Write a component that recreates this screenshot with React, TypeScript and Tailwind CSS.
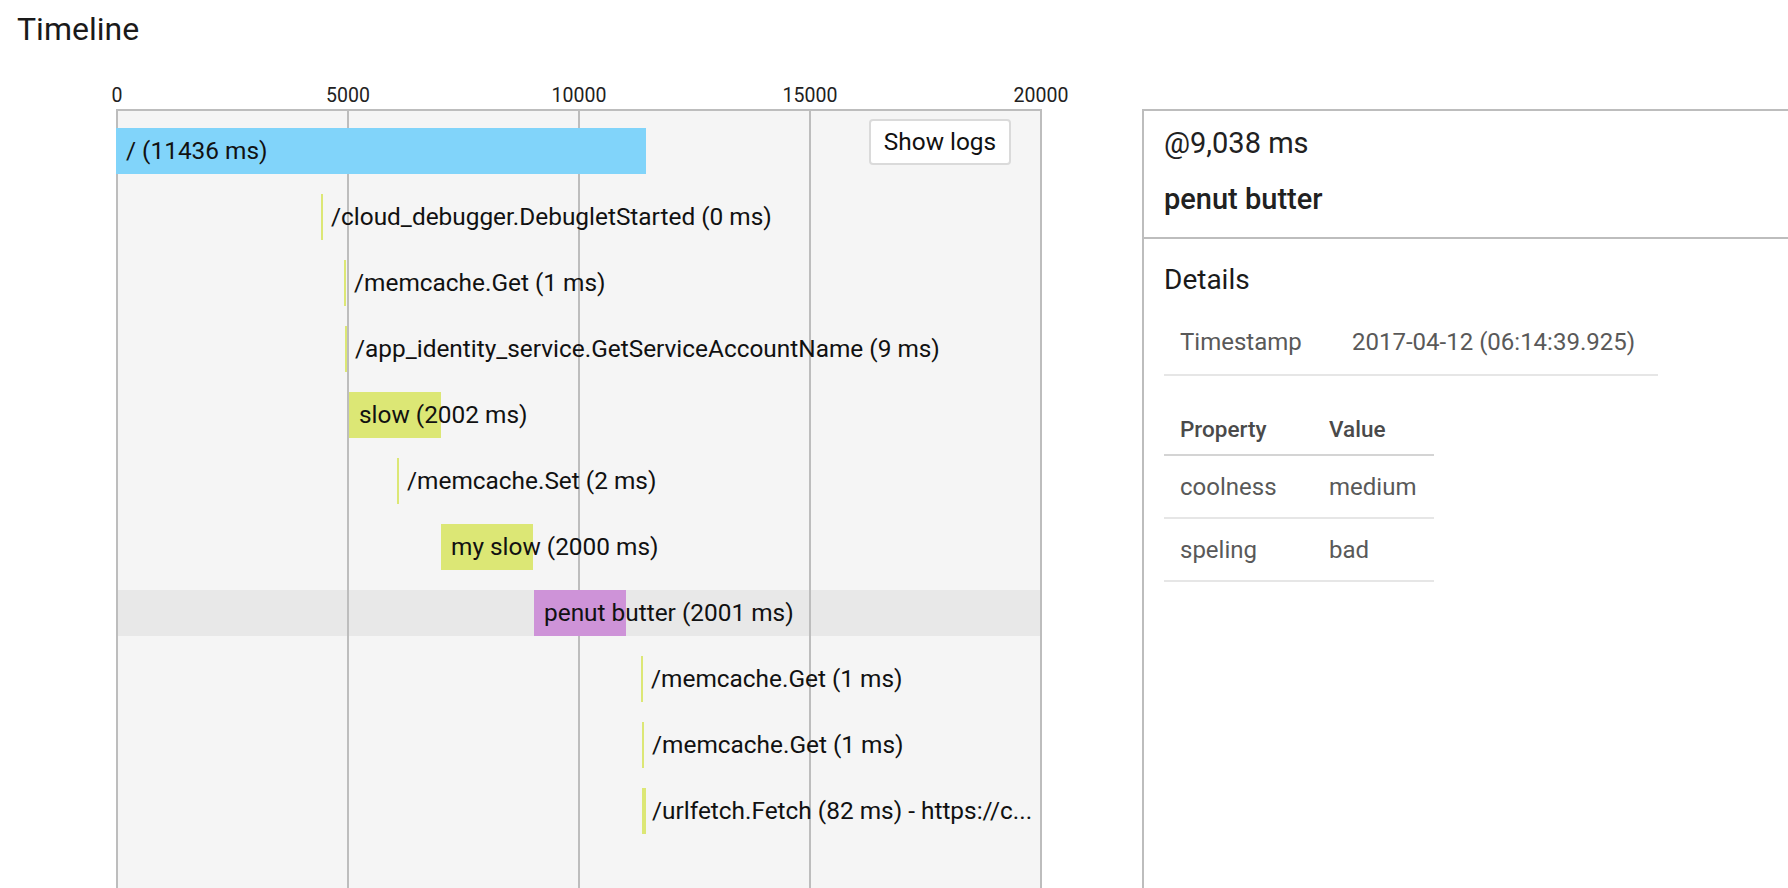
import React from 'react';

const SCALE = 924 / 20000;
const LIME = '#dce775';

type Span = { label: string; start: number; dur: number; color: string; selected?: boolean };

const spans: Span[] = [
  { label: '/ (11436 ms)', start: 0, dur: 11480, color: '#81d4fa' },
  { label: '/cloud_debugger.DebugletStarted (0 ms)', start: 4437, dur: 0, color: LIME },
  { label: '/memcache.Get (1 ms)', start: 4942, dur: 1, color: LIME },
  { label: '/app_identity_service.GetServiceAccountName (9 ms)', start: 4950, dur: 9, color: LIME },
  { label: 'slow (2002 ms)', start: 5036, dur: 2002, color: LIME },
  { label: '/memcache.Set (2 ms)', start: 6082, dur: 2, color: LIME },
  { label: 'my slow (2000 ms)', start: 7038, dur: 2000, color: LIME },
  { label: 'penut butter (2001 ms)', start: 9038, dur: 2001, color: '#ce93d8', selected: true },
  { label: '/memcache.Get (1 ms)', start: 11359, dur: 1, color: LIME },
  { label: '/memcache.Get (1 ms)', start: 11394, dur: 1, color: LIME },
  { label: '/urlfetch.Fetch (82 ms) - https://c...', start: 11394, dur: 82, color: LIME },
];

const ticks = [0, 5000, 10000, 15000, 20000];

const ROW_TOP = 19;
const ROW_PITCH = 66;
const BAR_H = 46;

export default function App() {
  return (
    <div className="h-[888px] w-full overflow-hidden bg-white font-['Roboto','Liberation_Sans',sans-serif] text-[#212121]">
      <h1 className="pl-[17px] pt-[10px] text-[32px] font-normal leading-[38px] text-[#1a1a1a]">Timeline</h1>
      <div className="mt-[36px] flex items-start">
        {/* Chart column */}
        <div className="w-[1042px] shrink-0 pl-[116px]">
          <div className="relative h-[25px] w-[926px]">
            {ticks.map((t) => (
              <span
                key={t}
                className="absolute top-0 -translate-x-1/2 whitespace-nowrap text-[19.5px] leading-[23px] text-[#212121]"
                style={{ left: t * SCALE + 1 }}
              >
                {t}
              </span>
            ))}
          </div>
          <div className="relative h-[790px] w-[926px] overflow-hidden bg-[#f5f5f5]">
            {/* selected row band */}
            {spans.map((s, i) =>
              s.selected ? (
                <div
                  key={'band' + i}
                  className="absolute left-0 right-0 h-[46px] bg-[#e8e8e8]"
                  style={{ top: ROW_TOP + i * ROW_PITCH }}
                />
              ) : null
            )}
            {/* grid lines */}
            <div className="absolute left-0 right-0 top-0 h-[2px] bg-[#bdbdbd]" />
            {ticks.map((t) => (
              <div
                key={'g' + t}
                className="absolute bottom-0 top-0 w-[2px] bg-[#bdbdbd]"
                style={{ left: Math.round(t * SCALE) }}
              />
            ))}
            {/* bars */}
            {spans.map((s, i) => {
              const left = Math.round(s.start * SCALE);
              const width = Math.max(2, Math.round(s.dur * SCALE));
              const top = ROW_TOP + i * ROW_PITCH;
              return (
                <React.Fragment key={'s' + i}>
                  <div
                    className="absolute"
                    style={{ left, width, top, height: BAR_H, backgroundColor: s.color }}
                  />
                  <div
                    className="absolute whitespace-nowrap text-[24.4px] leading-[46px] text-[#111111]"
                    style={{ left: left + 10, top, height: BAR_H }}
                  >
                    {s.label}
                  </div>
                </React.Fragment>
              );
            })}
            <button className="absolute right-[31px] top-[10px] flex h-[46px] w-[142px] items-center justify-center rounded-[4px] border-2 border-[#dadada] bg-white text-[24.4px] leading-none text-[#111111]">
              Show logs
            </button>
          </div>
        </div>

        {/* Details panel */}
        <div className="ml-[100px] mt-[25px] h-[790px] flex-1 border-l-2 border-t-2 border-[#bdbdbd]">
          <div className="border-b-2 border-[#bdbdbd] pb-[21px] pl-[20px] pt-[15px]">
            <div className="text-[29px] leading-[34px] text-[#212121]">@9,038 ms</div>
            <div className="mt-[22px] text-[29px] font-medium leading-[34px] text-[#212121]">penut butter</div>
          </div>
          <div className="pl-[20px] pt-[24px]">
            <div className="text-[28px] leading-[33px] text-[#1a1a1a]">Details</div>
            <div className="mt-[13px] grid w-[494px] grid-cols-[172px_322px] border-b-2 border-[#e6e6e6] text-[24px] text-[#595959]">
              <div className="flex h-[65px] items-center pl-4">Timestamp</div>
              <div className="flex h-[65px] items-center pl-4">2017-04-12 (06:14:39.925)</div>
            </div>
            <div className="mt-[29px] w-[270px]">
              <div className="grid grid-cols-[149px_121px] border-b-2 border-[#d4d4d4] text-[22.5px] font-medium text-[#4a4a4a]">
                <div className="flex h-[49px] items-center pl-4">Property</div>
                <div className="flex h-[49px] items-center pl-4">Value</div>
              </div>
              <div className="grid grid-cols-[149px_121px] border-b-2 border-[#e6e6e6] text-[24px] text-[#595959]">
                <div className="flex h-[61px] items-center pl-4">coolness</div>
                <div className="flex h-[61px] items-center pl-4">medium</div>
              </div>
              <div className="grid grid-cols-[149px_121px] border-b-2 border-[#e6e6e6] text-[24px] text-[#595959]">
                <div className="flex h-[61px] items-center pl-4">speling</div>
                <div className="flex h-[61px] items-center pl-4">bad</div>
              </div>
            </div>
          </div>
        </div>
      </div>
    </div>
  );
}
